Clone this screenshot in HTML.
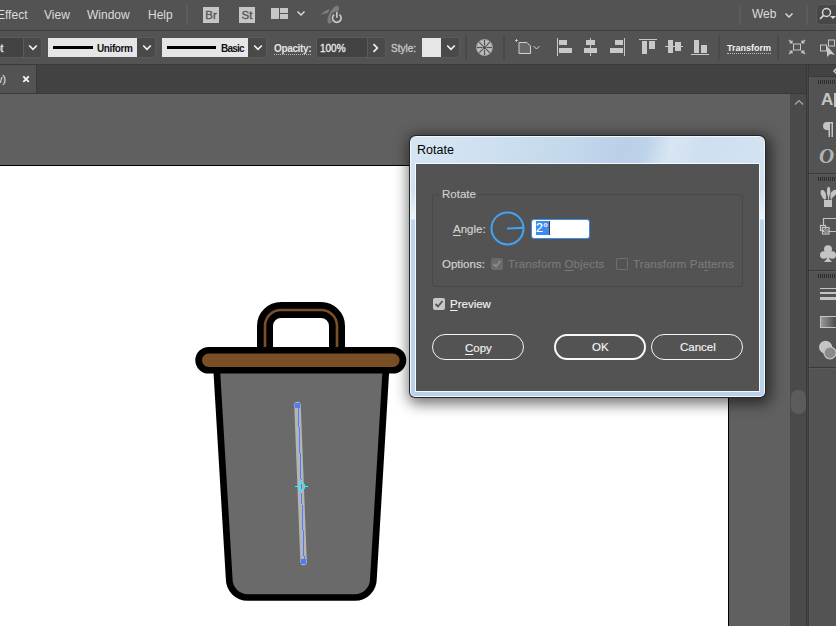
<!DOCTYPE html>
<html><head><meta charset="utf-8">
<style>
*{margin:0;padding:0;box-sizing:border-box}
html,body{width:836px;height:626px;overflow:hidden;background:#535353;font-family:"Liberation Sans",sans-serif}
.a{position:absolute}
.mt{position:absolute;top:7px;font-size:12px;color:#dcdcdc;white-space:nowrap;line-height:16px}
.sep{position:absolute;width:1px;background:#484848}
.cb{position:absolute;color:#d6d6d6;font-size:10px;white-space:nowrap;-webkit-text-stroke:0.3px currentColor}
.dd{position:absolute;top:37px;height:21px;width:19px;background:#4a4a4a;border:1px solid #474747}
.dd:after{content:"";position:absolute;left:5px;top:5px;width:5px;height:5px;border-right:1.6px solid #e0e0e0;border-bottom:1.6px solid #e0e0e0;transform:rotate(45deg)}
.dlg{font-family:"Liberation Sans",sans-serif;font-size:11.5px;line-height:1;white-space:nowrap;position:absolute;-webkit-text-stroke:0.15px currentColor}
u{text-decoration-thickness:1.4px;text-underline-offset:2px}
.btn{position:absolute;top:334px;height:26px;border:1.3px solid #f0f0f0;border-radius:13px;color:#f0f0f0;font-size:12.5px;text-align:center;line-height:23px}
</style></head><body>
<!-- menu bar -->
<div class="a" style="left:0;top:0;width:836px;height:29px;background:#535353"></div>
<div class="a" style="left:0;top:30px;width:836px;height:1px;background:#3c3c3c"></div>
<div class="mt" style="left:-3px">Effect</div>
<div class="mt" style="left:44px">View</div>
<div class="mt" style="left:87px">Window</div>
<div class="mt" style="left:148px">Help</div>
<div class="sep" style="left:186px;top:5px;height:20px;width:2px;background:#5c5c5c"></div>

<!-- control bar -->
<div class="a" style="left:0;top:31px;width:836px;height:33px;background:#535353"></div>
<div class="a" style="left:0;top:64px;width:836px;height:1px;background:#3a3a3a"></div>


<!-- menu icons -->
<div class="a" style="left:203px;top:7px;width:16px;height:16px;background:#c6c6c6;color:#575757;font-size:11.5px;-webkit-text-stroke:0.35px #575757;text-align:center;line-height:17px">Br</div>
<div class="a" style="left:239px;top:7px;width:16px;height:16px;background:#c6c6c6;color:#575757;font-size:11.5px;-webkit-text-stroke:0.35px #575757;text-align:center;line-height:17px">St</div>
<div class="a" style="left:271px;top:8px;width:8px;height:11px;background:#c6c6c6"></div>
<div class="a" style="left:280px;top:8px;width:8px;height:5px;background:#c6c6c6"></div>
<div class="a" style="left:280px;top:14px;width:8px;height:5px;background:#c6c6c6"></div>
<svg class="a" style="left:296px;top:9px" width="10" height="8"><path d="M1.5 2.5 L5 6 L8.5 2.5" stroke="#d8d8d8" stroke-width="1.5" fill="none"/></svg>
<svg class="a" style="left:319px;top:5px" width="26" height="20" viewBox="0 0 26 20">
<ellipse cx="14.2" cy="9.6" rx="10" ry="3.8" transform="rotate(-62 14.2 9.6)" fill="#7c7c7c"/>
<path d="M2 9.8 Q5 5.5 10.8 4 L9 8 Q5.5 8.8 2 9.8 Z" fill="#7c7c7c"/>
<circle cx="17.8" cy="12.7" r="6.3" fill="#535353"/>
<path d="M15.2 9.6 A4.3 4.3 0 1 0 20.4 9.6" stroke="#c8c8c8" stroke-width="1.7" fill="none"/>
<path d="M17.8 7 V12.8" stroke="#c8c8c8" stroke-width="1.7"/>
</svg>
<div class="sep" style="left:739px;top:5px;height:20px;width:2px;background:#5c5c5c"></div>
<div class="mt" style="left:752px;top:6px">Web</div>
<svg class="a" style="left:784px;top:10px" width="10" height="10"><path d="M1.5 3.5 L5 7 L8.5 3.5" stroke="#d8d8d8" stroke-width="1.5" fill="none"/></svg>
<div class="sep" style="left:806px;top:5px;height:20px;width:2px;background:#5c5c5c"></div>
<div class="a" style="left:816px;top:4px;width:30px;height:21px;background:#474747;border:1px solid #5a5a5a;border-radius:4px"></div>
<svg class="a" style="left:817px;top:6px" width="19" height="16"><circle cx="9.5" cy="6.5" r="4" stroke="#d8d8d8" stroke-width="1.5" fill="none"/><path d="M6.6 9.4 L3 13" stroke="#d8d8d8" stroke-width="1.7"/><path d="M13 10 L19 10 L16 13 Z" fill="#d8d8d8"/></svg>

<!-- control bar items -->
<div class="a" style="left:-4px;top:37px;width:46px;height:21px;background:#434343;border:1px solid #5a5a5a;border-radius:3px"></div>
<div class="a" style="left:24px;top:38px;width:17px;height:19px;background:#494949"></div>
<div class="a" style="left:23px;top:38px;width:1px;height:19px;background:#5a5a5a"></div>
<div class="cb" style="left:-5px;top:43px;color:#e8e8e8">pt</div>
<svg class="a" style="left:28px;top:44px" width="10" height="8"><path d="M1.2 1.5 L5 5.3 L8.8 1.5" stroke="#f2f2f2" stroke-width="1.7" fill="none"/></svg>
<div class="a" style="left:48px;top:38px;width:89px;height:19px;background:#e6e6e6"></div>
<div class="a" style="left:137px;top:37px;width:19px;height:21px;background:#494949;border:1px solid #5a5a5a;border-left:none;border-radius:0 3px 3px 0"></div><svg class="a" style="left:141.5px;top:44px" width="10" height="8"><path d="M1.2 1.5 L5 5.3 L8.8 1.5" stroke="#f2f2f2" stroke-width="1.7" fill="none"/></svg>
<div class="a" style="left:53px;top:46px;width:40px;height:3px;background:#000"></div>
<div class="cb" style="left:97px;top:43px;color:#101018;font-weight:bold;font-size:10px;letter-spacing:-0.4px;-webkit-text-stroke:0">Uniform</div>
<div class="a" style="left:162px;top:38px;width:86px;height:19px;background:#e6e6e6"></div>
<div class="a" style="left:248px;top:37px;width:19px;height:21px;background:#494949;border:1px solid #5a5a5a;border-left:none;border-radius:0 3px 3px 0"></div><svg class="a" style="left:252.5px;top:44px" width="10" height="8"><path d="M1.2 1.5 L5 5.3 L8.8 1.5" stroke="#f2f2f2" stroke-width="1.7" fill="none"/></svg>
<div class="a" style="left:167px;top:46px;width:49px;height:3px;background:#000"></div>
<div class="cb" style="left:221px;top:43px;color:#101018;font-weight:bold;font-size:10px;letter-spacing:-0.8px;-webkit-text-stroke:0">Basic</div>
<div class="cb" style="left:274px;top:43px;color:#e4e4e4;font-weight:bold;font-size:10px;letter-spacing:-0.35px;-webkit-text-stroke:0">Opacity:</div>
<div class="a" style="left:274px;top:54px;width:37px;height:0;border-top:1px dotted #bbb"></div>
<div class="a" style="left:316px;top:37px;width:70px;height:21px;background:#434343;border:1px solid #5a5a5a;border-radius:3px"></div>
<div class="a" style="left:368px;top:38px;width:17px;height:19px;background:#494949;border-radius:0 2px 2px 0"></div>
<div class="a" style="left:367px;top:38px;width:1px;height:19px;background:#5a5a5a"></div>
<div class="cb" style="left:320px;top:43px;color:#eaeaea">100%</div>
<svg class="a" style="left:372px;top:43px" width="8" height="10"><path d="M1.5 1.2 L5.3 5 L1.5 8.8" stroke="#f2f2f2" stroke-width="1.7" fill="none"/></svg>
<div class="cb" style="left:391px;top:43px;color:#c8c8c8">Style:</div>
<div class="a" style="left:422px;top:38px;width:19px;height:19px;background:#e6e6e6"></div>
<div class="a" style="left:441px;top:37px;width:19px;height:21px;background:#494949;border:1px solid #5a5a5a;border-left:none;border-radius:0 3px 3px 0"></div><svg class="a" style="left:445.5px;top:44px" width="10" height="8"><path d="M1.2 1.5 L5 5.3 L8.8 1.5" stroke="#f2f2f2" stroke-width="1.7" fill="none"/></svg>
<div class="sep" style="left:465px;top:35px;height:25px;width:2px;background:#4a4a4a"></div>
<svg class="a" style="left:476px;top:39px" width="17" height="17" viewBox="0 0 17 17"><circle cx="8.5" cy="8.5" r="8" fill="#bdbdbd"/><circle cx="8.5" cy="8.5" r="2" fill="#535353"/><g stroke="#535353" stroke-width="1.2"><path d="M8.5 1 V6"/><path d="M8.5 11 V16"/><path d="M1 8.5 H6"/><path d="M11 8.5 H16"/><path d="M3.2 3.2 L6.8 6.8"/><path d="M10.2 10.2 L13.8 13.8"/><path d="M13.8 3.2 L10.2 6.8"/><path d="M6.8 10.2 L3.2 13.8"/></g><circle cx="8.5" cy="8.5" r="8" stroke="#9a9a9a" stroke-width="1" fill="none"/></svg>
<div class="sep" style="left:503px;top:35px;height:25px;width:2px;background:#4a4a4a"></div>
<svg class="a" style="left:514px;top:38px" width="28" height="18" viewBox="0 0 28 18"><path d="M5 4.5 H13 L16.5 8 V15.5 H5 Z" fill="#686868" stroke="#d0d0d0" stroke-width="1"/><path d="M2.5 1 V4 M1 2.5 H4" stroke="#d0d0d0" stroke-width="0.8"/><path d="M19.5 8 L22.5 11 L25.5 8" stroke="#d0d0d0" stroke-width="1" fill="none"/></svg>
<!-- align icons -->
<div class="a" style="left:557px;top:38px;width:1px;height:18px;background:#c8c8c8"></div>
<div class="a" style="left:559px;top:40px;width:8px;height:5px;background:#c8c8c8"></div>
<div class="a" style="left:559px;top:48px;width:13px;height:5px;background:#c8c8c8"></div>
<div class="a" style="left:590px;top:38px;width:1px;height:18px;background:#c8c8c8"></div>
<div class="a" style="left:586px;top:40px;width:9px;height:5px;background:#c8c8c8"></div>
<div class="a" style="left:584px;top:48px;width:13px;height:5px;background:#c8c8c8"></div>
<div class="a" style="left:624px;top:38px;width:1px;height:18px;background:#c8c8c8"></div>
<div class="a" style="left:615px;top:40px;width:8px;height:5px;background:#c8c8c8"></div>
<div class="a" style="left:610px;top:48px;width:13px;height:5px;background:#c8c8c8"></div>
<div class="a" style="left:639px;top:39px;width:18px;height:1px;background:#c8c8c8"></div>
<div class="a" style="left:642px;top:41px;width:5px;height:13px;background:#c8c8c8"></div>
<div class="a" style="left:649px;top:41px;width:6px;height:8px;background:#c8c8c8"></div>
<div class="a" style="left:665px;top:46px;width:18px;height:1px;background:#c8c8c8"></div>
<div class="a" style="left:668px;top:40px;width:5px;height:13px;background:#c8c8c8"></div>
<div class="a" style="left:675px;top:42px;width:6px;height:9px;background:#c8c8c8"></div>
<div class="a" style="left:691px;top:54px;width:18px;height:1px;background:#c8c8c8"></div>
<div class="a" style="left:694px;top:40px;width:5px;height:13px;background:#c8c8c8"></div>
<div class="a" style="left:701px;top:45px;width:6px;height:8px;background:#c8c8c8"></div>
<div class="sep" style="left:718px;top:35px;height:25px;width:2px;background:#4a4a4a"></div>
<div class="cb" style="left:727px;top:43px;color:#f4f4f4;font-weight:bold;font-size:9px;-webkit-text-stroke:0">Transform</div>
<div class="a" style="left:727px;top:53px;width:44px;height:0;border-top:1px dotted #bbb"></div>
<div class="sep" style="left:777px;top:35px;height:25px;width:2px;background:#4a4a4a"></div>
<svg class="a" style="left:788px;top:39px" width="18" height="16" viewBox="0 0 18 16"><rect x="5.5" y="5" width="7" height="6" fill="none" stroke="#c8c8c8" stroke-width="1"/><g stroke="#c8c8c8" stroke-width="1.2" fill="none"><path d="M1 1 L4 4 M4 1.5 V4 H1.5"/><path d="M17 1 L14 4 M14 1.5 V4 H16.5"/><path d="M1 15 L4 12 M4 14.5 V12 H1.5"/><path d="M17 15 L14 12 M14 14.5 V12 H16.5"/></g></svg>
<svg class="a" style="left:819px;top:38px" width="17" height="20" viewBox="0 0 17 20"><rect x="1.5" y="7" width="6" height="6" fill="none" stroke="#c8c8c8" stroke-width="1"/><rect x="9.5" y="2" width="6" height="6" fill="none" stroke="#c8c8c8" stroke-width="1"/><path d="M8 8 L8 19 L11 16 L16 17 Z" fill="#c8c8c8"/></svg>

<!-- tab bar -->
<div class="a" style="left:0;top:65px;width:808px;height:28px;background:#424242"></div>
<div class="a" style="left:0;top:65px;width:36px;height:28px;background:#535353"></div>

<div class="a" style="left:36px;top:65px;width:1px;height:28px;background:#3a3a3a"></div>
<div class="a" style="left:0;top:93px;width:806px;height:1px;background:#3a3a3a"></div>
<div class="a" style="left:-6px;top:73px;font-size:11.5px;color:#e6e6e6;white-space:nowrap">w)</div>
<svg class="a" style="left:22px;top:75px" width="8" height="8"><path d="M1.3 1.3 L6.8 6.8 M6.8 1.3 L1.3 6.8" stroke="#f4f4f4" stroke-width="1.9"/></svg>
<!-- canvas -->
<div class="a" style="left:0;top:94px;width:790px;height:532px;background:#606060"></div>
<div class="a" style="left:0;top:165px;width:729px;height:461px;background:#000"></div>
<div class="a" style="left:0;top:166px;width:728px;height:460px;background:#fff"></div>
<!-- trash can -->
<svg class="a" style="left:0;top:0" width="836" height="626" viewBox="0 0 836 626">
<path d="M265 351 V326 A16 16 0 0 1 281 310 H321 A16 16 0 0 1 337 326 V351" fill="none" stroke="#000" stroke-width="16"/>
<path d="M265 351 V326 A16 16 0 0 1 281 310 H321 A16 16 0 0 1 337 326 V351" fill="none" stroke="#7b5028" stroke-width="2.6"/>
<path d="M216.6 368 L229.2 579 A18.5 18.5 0 0 0 247.7 597.5 H354.9 A18.5 18.5 0 0 0 373.4 579 L386 368 Z" fill="#6a6a6a" stroke="#000" stroke-width="6.7" stroke-linejoin="round"/>
<rect x="198.65" y="350.25" width="204.3" height="20" rx="10" fill="#7a4e26" stroke="#000" stroke-width="6.7"/>
<line x1="297.5" y1="405" x2="303.6" y2="562" stroke="#b4b4b4" stroke-width="6.5" stroke-linecap="round"/>
<line x1="298.2" y1="406" x2="304.2" y2="561" stroke="#4d7cfe" stroke-width="1" shape-rendering="crispEdges"/>
<rect x="295" y="403" width="5" height="5" fill="#4d7cfe"/>
<rect x="301" y="559" width="5" height="5" fill="#4d7cfe"/>
<g stroke="#2ef2ff" stroke-width="1.1" fill="none"><circle cx="301.5" cy="486.5" r="3.2"/><path d="M295 486.5 H298.3 M304.7 486.5 H308 M301.5 480 V483.3 M301.5 489.7 V493"/></g>
</svg>
<!-- dialog -->
<div class="a" style="left:409px;top:135px;width:357px;height:263px;border-radius:7px 7px 6px 6px;background:#262626;box-shadow:2px 3px 14px 3px rgba(0,0,0,0.55)"></div>
<div class="a" style="left:410px;top:136px;width:355px;height:261px;border-radius:6px 6px 5px 5px;background:#f2f7fc"></div>
<div class="a" style="left:411px;top:137px;width:353px;height:259px;border-radius:5px 5px 4px 4px;background:linear-gradient(180deg,#d6e5f3 0px,#cfe0f0 53px,#eef4fa 82px,#bdd5ec 83px,#b9d1ea 259px)"></div>
<div class="a" style="left:411px;top:137px;width:353px;height:26px;border-radius:5px 5px 0 0;background:linear-gradient(105deg,#d6e5f3 0%,#cfe1f1 20%,#c3d8ec 45%,#b9d0e7 60%,#bdd3e9 66%,#d8e6f3 73%,#cddff0 82%,#d3e3f2 100%)"></div>
<div class="dlg" style="left:417px;top:144px;color:#000;font-size:12.5px;-webkit-text-stroke:0">Rotate</div>
<div class="a" style="left:415px;top:163px;width:345px;height:229px;border:1px solid #f4f8fc;background:#535353"></div>

<div class="a" style="left:432px;top:194px;width:311px;height:93px;border:1px solid #484848;border-radius:3px"></div>
<div class="dlg" style="left:439px;top:189px;padding:0 3px;background:#535353;color:#cfcfcf">Rotate</div>
<div class="dlg" style="left:453px;top:224px;color:#d4d4d4"><u>A</u>ngle:</div>
<svg class="a" style="left:489px;top:210px" width="37" height="37" viewBox="0 0 37 37"><circle cx="18.5" cy="18.4" r="16" fill="none" stroke="#44a2f6" stroke-width="2"/><path d="M18 18.5 L35 17.8" stroke="#44a2f6" stroke-width="2"/></svg>
<div class="a" style="left:531px;top:219px;width:59px;height:20px;background:#fff;border:1.5px solid #3a8ee9;border-radius:3px"></div>
<div class="a" style="left:536px;top:221px;width:13px;height:14px;background:#3b8cf2"></div>
<div class="a" style="left:549px;top:221px;width:1px;height:14px;background:#5a3010"></div>
<div class="dlg" style="left:536px;top:222px;color:#fff;font-size:12.5px">2°</div>
<div class="dlg" style="left:442px;top:259px;color:#d4d4d4">Options:</div>
<div class="a" style="left:491px;top:258px;width:12px;height:12px;background:#6a6a6a;border-radius:2px"></div>
<svg class="a" style="left:491px;top:258px" width="12" height="12"><path d="M2.5 6 L5 8.5 L9.5 3" stroke="#8c8c8c" stroke-width="1.8" fill="none"/></svg>
<div class="dlg" style="left:508px;top:259px;color:#7a7a7a;letter-spacing:0.13px">Transform <u>O</u>bjects</div>
<div class="a" style="left:616px;top:258px;width:12px;height:12px;border:1px solid #6e6e6e;border-radius:1px"></div>
<div class="dlg" style="left:633px;top:259px;color:#7a7a7a;letter-spacing:0.17px">Transform Pa<u>t</u>terns</div>
<div class="a" style="left:433px;top:298px;width:12px;height:12px;background:#c8c8c8;border-radius:2px"></div>
<svg class="a" style="left:433px;top:298px" width="12" height="12"><path d="M2.5 6 L5 8.5 L9.5 3" stroke="#555" stroke-width="1.8" fill="none"/></svg>
<div class="dlg" style="left:450px;top:299px;color:#f2f2f2"><u>P</u>review</div>
<div class="a" style="left:432px;top:334px;width:92px;height:26px;border:1.5px solid #f4f4f4;border-radius:13px"></div>
<div class="dlg" style="left:465px;top:343px;color:#f4f4f4"><u>C</u>opy</div>
<div class="a" style="left:554px;top:334px;width:92px;height:26px;border:2px solid #f8f8f8;border-radius:13px"></div>
<div class="dlg" style="left:592px;top:342px;color:#f4f4f4">OK</div>
<div class="a" style="left:651px;top:334px;width:92px;height:26px;border:1.5px solid #f4f4f4;border-radius:13px"></div>
<div class="dlg" style="left:680px;top:342px;color:#f4f4f4">Cancel</div>
<!-- scrollbar -->
<div class="a" style="left:790px;top:94px;width:16px;height:532px;background:#4a4a4a"></div>
<svg class="a" style="left:794px;top:99px" width="10" height="7"><path d="M1 5.5 L5 1.5 L9 5.5" stroke="#a8a8a8" stroke-width="1.2" fill="none"/></svg>
<div class="a" style="left:791px;top:390px;width:15px;height:24px;background:#5c5c5c;border-radius:7px"></div>
<!-- divider -->
<div class="a" style="left:806px;top:65px;width:1px;height:561px;background:#383838"></div>
<div class="a" style="left:807px;top:65px;width:1px;height:561px;background:#464646"></div>
<div class="a" style="left:808px;top:65px;width:1px;height:561px;background:#3a3a3a"></div>
<!-- right panel -->
<div class="a" style="left:809px;top:65px;width:27px;height:11px;background:#434343"></div>
<div class="a" style="left:809px;top:76px;width:27px;height:1px;background:#393939"></div>
<div class="a" style="left:809px;top:77px;width:27px;height:549px;background:#535353"></div>
<div class="a" style="left:809px;top:77px;width:1px;height:549px;background:#5a5a5a"></div>
<svg class="a" style="left:832px;top:67px" width="6" height="8"><path d="M5 1 L2 4 L5 7" stroke="#d0d0d0" stroke-width="1.5" fill="none"/></svg>
<svg class="a" style="left:817px;top:80px" width="19" height="4"><g fill="#2e2e2e"><rect x="1" y="0" width="1" height="4"/><rect x="3" y="0" width="1" height="4"/><rect x="5" y="0" width="1" height="4"/><rect x="7" y="0" width="1" height="4"/><rect x="9" y="0" width="1" height="4"/><rect x="11" y="0" width="1" height="4"/><rect x="13" y="0" width="1" height="4"/><rect x="15" y="0" width="1" height="4"/><rect x="17" y="0" width="1" height="4"/></g></svg>
<div class="a" style="left:821px;top:90px;font-size:17px;font-weight:bold;color:#c4c4c4;line-height:20px">A</div>
<div class="a" style="left:834px;top:93px;width:2px;height:14px;background:#c4c4c4"></div>
<svg class="a" style="left:821px;top:121px" width="13" height="17" viewBox="0 0 13 17"><path d="M6 1 H12 V16 H10.5 V2.5 H9 V16 H7.5 V9 H6 A4 4 0 0 1 6 1 Z" fill="#c4c4c4"/></svg>
<div class="a" style="left:819px;top:145px;font-family:'Liberation Serif',serif;font-style:italic;font-weight:bold;font-size:21px;color:#b4b4b4;line-height:22px">O</div>
<div class="a" style="left:809px;top:173px;width:27px;height:1px;background:#3a3a3a"></div>
<div class="a" style="left:809px;top:174px;width:27px;height:1px;background:#5a5a5a"></div>
<svg class="a" style="left:817px;top:177px" width="19" height="4"><g fill="#2e2e2e"><rect x="1" y="0" width="1" height="4"/><rect x="3" y="0" width="1" height="4"/><rect x="5" y="0" width="1" height="4"/><rect x="7" y="0" width="1" height="4"/><rect x="9" y="0" width="1" height="4"/><rect x="11" y="0" width="1" height="4"/><rect x="13" y="0" width="1" height="4"/><rect x="15" y="0" width="1" height="4"/><rect x="17" y="0" width="1" height="4"/></g></svg>
<svg class="a" style="left:820px;top:186px" width="16" height="22" viewBox="0 0 16 22"><path d="M4 14 H12 V21 H4 Z" fill="#c4c4c4"/><ellipse cx="3.6" cy="8.5" rx="2.4" ry="4.8" transform="rotate(-22 3.6 8.5)" fill="#c4c4c4"/><ellipse cx="8.6" cy="5.5" rx="1.7" ry="4.8" fill="#c4c4c4"/><ellipse cx="13.2" cy="7.8" rx="2.4" ry="4.8" transform="rotate(45 13.2 7.8)" fill="#c4c4c4"/><path d="M5 13.5 L4.5 11 M8.6 13.5 V9 M11 13.5 L12 11" stroke="#c4c4c4" stroke-width="1.3"/><path d="M6.2 7 L7 13 M10.3 7.5 L9.8 13" stroke="#535353" stroke-width="0.8"/></svg>
<svg class="a" style="left:819px;top:217px" width="17" height="18" viewBox="0 0 17 18"><path d="M4.5 9 V1.5 H17 M4.5 13.5 V14.5 H17" stroke="#c4c4c4" stroke-width="1.2" fill="none"/><rect x="1.5" y="8.5" width="5" height="5" fill="#535353" stroke="#c4c4c4" stroke-width="1.2"/><rect x="3.5" y="10.5" width="6.5" height="6.5" fill="none" stroke="#c4c4c4" stroke-width="1.2"/><rect x="5" y="12" width="4" height="4" fill="#8a8a8a"/></svg>
<svg class="a" style="left:820px;top:245px" width="16" height="18" viewBox="0 0 16 18"><circle cx="8" cy="4.2" r="4" fill="#c4c4c4"/><circle cx="3.8" cy="10" r="3.8" fill="#c4c4c4"/><circle cx="12.2" cy="10" r="3.8" fill="#c4c4c4"/><path d="M7 8 L9 8 L9.3 14 L12 17 L4 17 L6.7 14 Z" fill="#c4c4c4"/></svg>
<div class="a" style="left:809px;top:270px;width:27px;height:1px;background:#3a3a3a"></div>
<div class="a" style="left:809px;top:271px;width:27px;height:1px;background:#5a5a5a"></div>
<svg class="a" style="left:817px;top:274px" width="19" height="4"><g fill="#2e2e2e"><rect x="1" y="0" width="1" height="4"/><rect x="3" y="0" width="1" height="4"/><rect x="5" y="0" width="1" height="4"/><rect x="7" y="0" width="1" height="4"/><rect x="9" y="0" width="1" height="4"/><rect x="11" y="0" width="1" height="4"/><rect x="13" y="0" width="1" height="4"/><rect x="15" y="0" width="1" height="4"/><rect x="17" y="0" width="1" height="4"/></g></svg>
<div class="a" style="left:820px;top:288px;width:16px;height:1px;background:#c4c4c4"></div>
<div class="a" style="left:820px;top:292px;width:16px;height:2px;background:#c4c4c4"></div>
<div class="a" style="left:820px;top:297px;width:16px;height:3px;background:#c4c4c4"></div>
<div class="a" style="left:820px;top:316px;width:17px;height:12px;border:1px solid #c4c4c4;background:linear-gradient(90deg,#9a9a9a,#4a4a4a)"></div>
<svg class="a" style="left:818px;top:339px" width="18" height="22" viewBox="0 0 18 22"><circle cx="7.6" cy="8.2" r="6.5" fill="#c4c4c4"/><circle cx="12" cy="13.8" r="6" fill="#8a8a8a" stroke="#c4c4c4" stroke-width="1.2"/></svg>
<div class="a" style="left:809px;top:367px;width:27px;height:1px;background:#3a3a3a"></div>
<div class="a" style="left:809px;top:368px;width:27px;height:1px;background:#5a5a5a"></div>
</body></html>
